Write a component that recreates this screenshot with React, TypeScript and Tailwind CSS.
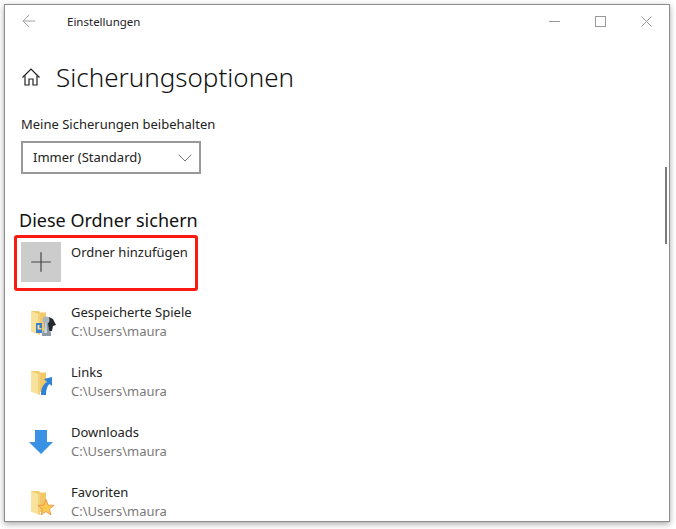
import { ArrowLeft, ChevronDown, Plus } from "lucide-react";
import type { ReactNode } from "react";

const Folder = ({ children }: { children?: ReactNode }) => (
    <svg width="28" height="28" viewBox="0 0 28 28">
        <path d="M2 1h8l1 1.500h6V22h-6v3z" fill="#f1c968" />
        <path d="M2 1l9 3.500V25l-7-2.500-2-1z" fill="#f9e29b" />
        <path d="M9 4v20l2 1V4.500z" fill="#f3d27e" />
        {children}
    </svg>
);

const GamesIcon = () => (
    <Folder>
        <rect x="7" y="13" width="6" height="10" fill="#3b7fd0" />
        <path d="M8.500 15h2v3h2v1.500h-4z" fill="#f4d98a" />
        <path d="M20 7l4 2 3 6-3 1-1 5-5 1-2-9z" fill="#26292d" />
        <circle cx="17" cy="10" r="3.500" fill="#aab5be" />
        <path d="M15 13h4l1 7 2 3v3H13v-3l2-3z" fill="#8d9aa5" />
        <path d="M16 13h1.500l.5 10h-3z" fill="#cfd6dc" />
    </Folder>
);

const LinksIcon = () => (
    <Folder>
        <path d="M12 25c0-7 2-11 6-13l-3-3 8-2v9l-2.500-2c-2.500 2-3.500 6-3.500 11z" fill="#2f83d6" />
    </Folder>
);

const FavoritesIcon = () => (
    <Folder>
        <path
            d="M17 9.500l2.100 5.600 6 .3-4.700 3.700 1.600 5.800-5-3.300-5 3.300 1.600-5.800-4.700-3.700 6-.3z"
            fill="#f8cb55"
            stroke="#ee8a3c"
            strokeWidth="0.8"
        />
    </Folder>
);

const DownloadIcon = () => (
    <svg width="28" height="28" viewBox="0 0 28 28">
        <path d="M6 0h12v12h6L12 24 0 12h6z" fill="#3a92e4" />
    </svg>
);

const HomeIcon = () => (
    <svg width="18" height="18" viewBox="0 0 18 18" fill="none" stroke="#222" strokeWidth="1.200">
        <path d="M.5 9.500L9 1l8.500 8.500" />
        <path d="M3 7.500V17h4v-6h4v6h4V7.500" />
    </svg>
);

const folders = [
    { name: "Gespeicherte Spiele", icon: <GamesIcon /> },
    { name: "Links", icon: <LinksIcon /> },
    { name: "Downloads", icon: <DownloadIcon /> },
    { name: "Favoriten", icon: <FavoritesIcon /> },
];

const App = () => {
    return (
        <div className="h-[529px] w-[676px] overflow-hidden bg-white pt-1 pr-[6px] pb-[7px] pl-1 font-['Noto_Sans',sans-serif]">
            <div className="relative h-full overflow-hidden border border-[#8c8c8c] bg-white text-black shadow-[0_2px_6px_rgba(0,0,0,0.35)]">
                <div className="flex h-[32px] items-center">
                    <ArrowLeft size={20} strokeWidth={1} absoluteStrokeWidth className="ml-[14px] text-[#a0a0a0]" />
                    <span className="mt-px ml-[28px] text-[11.500px] text-[#222]">Einstellungen</span>
                    <div className="ml-auto flex items-center gap-[35px] pr-[17px]">
                        <div className="h-px w-[11px] bg-[#999]" />
                        <div className="h-[11px] w-[11px] border border-[#999]" />
                        <svg width="11" height="11" viewBox="0 0 11 11" className="text-[#999]">
                            <path d="M.5.500l10 10M10.500.500l-10 10" stroke="currentColor" fill="none" />
                        </svg>
                    </div>
                </div>

                <div className="mt-[19px] flex items-center pl-[17px]">
                    <HomeIcon />
                    <h1 className="ml-[16px] text-[26px] leading-[42px] font-light text-[#111]">Sicherungsoptionen</h1>
                </div>

                <div className="mt-[15px] pl-[16px] text-[13px] leading-[22px] text-[#222]">Meine Sicherungen beibehalten</div>

                <div className="mt-[6px] ml-[16px] flex h-[33px] w-[180px] items-center justify-between border-2 border-[#999] pr-[2px] pl-[10px] text-[13px] text-[#222]">
                    <span>Immer (Standard)</span>
                    <ChevronDown size={24} strokeWidth={1} absoluteStrokeWidth className="text-[#777]" />
                </div>

                <h2 className="mt-[32px] pl-[14px] text-[18px] leading-[28px] text-[#111]">Diese Ordner sichern</h2>

                <div className="mt-[1px] ml-[9px] flex h-[56px] w-[184px] items-start gap-[10px] rounded-[3px] border-[3px] border-[#fa1a12] pt-[4px] pl-[4px]">
                    <div className="flex h-[40px] w-[40px] items-center justify-center bg-[#cccccc]">
                        <Plus size={32} strokeWidth={1.200} absoluteStrokeWidth className="text-[#444]" />
                    </div>
                    <span className="text-[13px] leading-[20px] text-[#222]">Ordner hinzufügen</span>
                </div>

                <div className="mt-[11px] flex flex-col">
                    {folders.map((folder) => (
                        <div key={folder.name} className="flex h-[60px] items-start pl-[24px]">
                            <div className="mt-[8px] w-[42px]">{folder.icon}</div>
                            <div>
                                <div className="text-[13px] leading-[20px] text-[#222]">{folder.name}</div>
                                <div className="text-[13px] leading-[19px] text-[#7a7a7a]">C:\Users\maura</div>
                            </div>
                        </div>
                    ))}
                </div>

                <div className="absolute top-[162px] right-[2px] h-[77px] w-[2px] bg-[#7a7a7a]" />
            </div>
        </div>
    );
};

export default App;
